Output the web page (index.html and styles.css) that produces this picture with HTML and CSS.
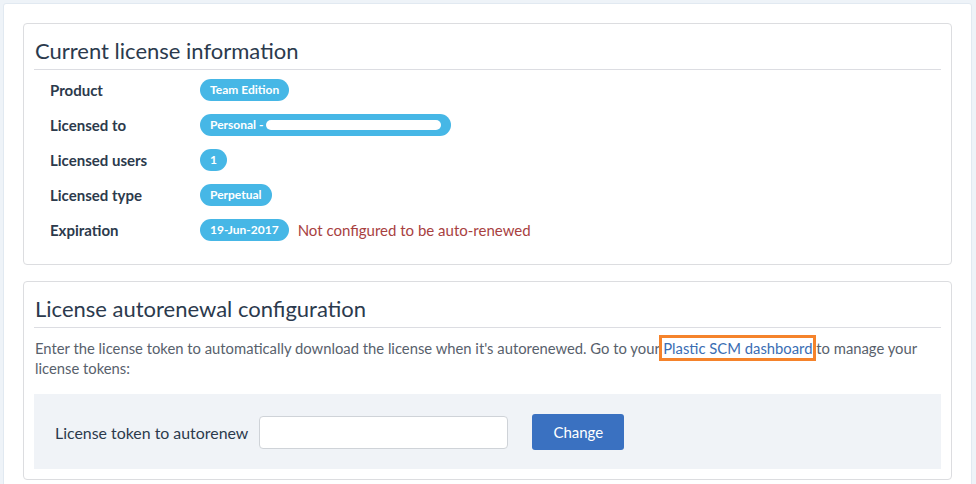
FILE: index.html
```html
<!DOCTYPE html>
<html lang="en">
<head>
<meta charset="utf-8">
<title>License</title>
<link rel="stylesheet" href="styles.css">
</head>
<body>
<div class="panel">
  <section class="card">
    <h3 class="card-title">Current license information</h3>
    <div class="info">
      <div class="label">Product</div>
      <div class="value"><span class="badge">Team Edition</span></div>
      <div class="label">Licensed to</div>
      <div class="value"><span class="badge">Personal - <span class="redact"></span></span></div>
      <div class="label">Licensed users</div>
      <div class="value"><span class="badge">1</span></div>
      <div class="label">Licensed type</div>
      <div class="value"><span class="badge">Perpetual</span></div>
      <div class="label">Expiration</div>
      <div class="value"><span class="badge">19-Jun-2017</span><span class="warn">Not configured to be auto-renewed</span></div>
    </div>
  </section>
  <section class="card">
    <h3 class="card-title">License autorenewal configuration</h3>
    <p class="desc">Enter the license token to automatically download the license when it's autorenewed. Go to your <a class="link" href="#">Plastic SCM dashboard</a> to manage your license tokens:</p>
    <form class="token-form">
      <label class="token-label" for="tok">License token to autorenew</label>
      <input class="token-input" id="tok" type="text">
      <button class="btn" type="button">Change</button>
    </form>
  </section>
</div>
</body>
</html>
```
FILE: styles.css
```css
html, body {
  margin: 0;
  padding: 0;
}
body {
  background: #eef3f8;
  font-family: Lato, "Open Sans", sans-serif;
  color: #2c3a4c;
  padding-top: 3px;
}
.panel {
  margin: 0 4px 0 3px;
  background: #fff;
  border: 1px solid #e1e9f1;
  border-radius: 3px;
  padding: 19px 19px 30px;
}
.card {
  border: 1px solid #dcdde0;
  border-radius: 4px;
  padding: 14px 10px 17px;
}
.card + .card {
  margin-top: 16px;
  padding-bottom: 10px;
}
.card-title {
  margin: 0;
  font-size: 22px;
  font-weight: 400;
  line-height: 26px;
  color: #2b3a4d;
  padding: 0 0 5px 1px;
  border-bottom: 1px solid #dcdde2;
}
.info {
  display: grid;
  grid-template-columns: 150px 1fr;
  grid-auto-rows: 35px;
  margin-top: 2px;
  padding-left: 16px;
}
.label {
  display: flex;
  align-items: center;
  font-size: 15px;
  font-weight: 700;
  color: #2c3a4c;
}
.value {
  display: flex;
  align-items: center;
}
.badge {
  display: inline-flex;
  align-items: center;
  height: 22px;
  padding: 0 10px;
  border-radius: 11px;
  background: #46b7e6;
  color: #fff;
  font-size: 12px;
  font-weight: 700;
  white-space: pre;
}
.redact {
  display: inline-block;
  width: 175px;
  height: 10px;
  background: #fff;
  border-radius: 5px;
}
.warn {
  margin-left: 9px;
  font-size: 15px;
  color: #a8413f;
}
.desc {
  margin: 10px 0 16px;
  padding-left: 1px;
  font-size: 14.8px;
  line-height: 20px;
  color: #58616c;
}
.link {
  color: #3a6db3;
  text-decoration: none;
  outline: 3px solid #f5832b;
  outline-offset: 1px;
}
.token-form {
  display: flex;
  align-items: center;
  background: #f0f3f7;
  padding: 20px 21px 19px;
  margin: 0;
}
.token-label {
  font-size: 15.9px;
  color: #2c3a4c;
  margin-right: 11px;
}
.token-input {
  width: 249px;
  height: 33px;
  box-sizing: border-box;
  border: 1px solid #cfd3d8;
  border-radius: 4px;
  background: #fff;
  margin: 0 24px 0 0;
  padding: 0 8px;
  font-family: inherit;
}
.btn {
  width: 92px;
  height: 36px;
  border: none;
  border-radius: 3px;
  background: #3a71c1;
  color: #fff;
  font-family: Lato, sans-serif;
  font-size: 15px;
  padding: 0;
}
```
